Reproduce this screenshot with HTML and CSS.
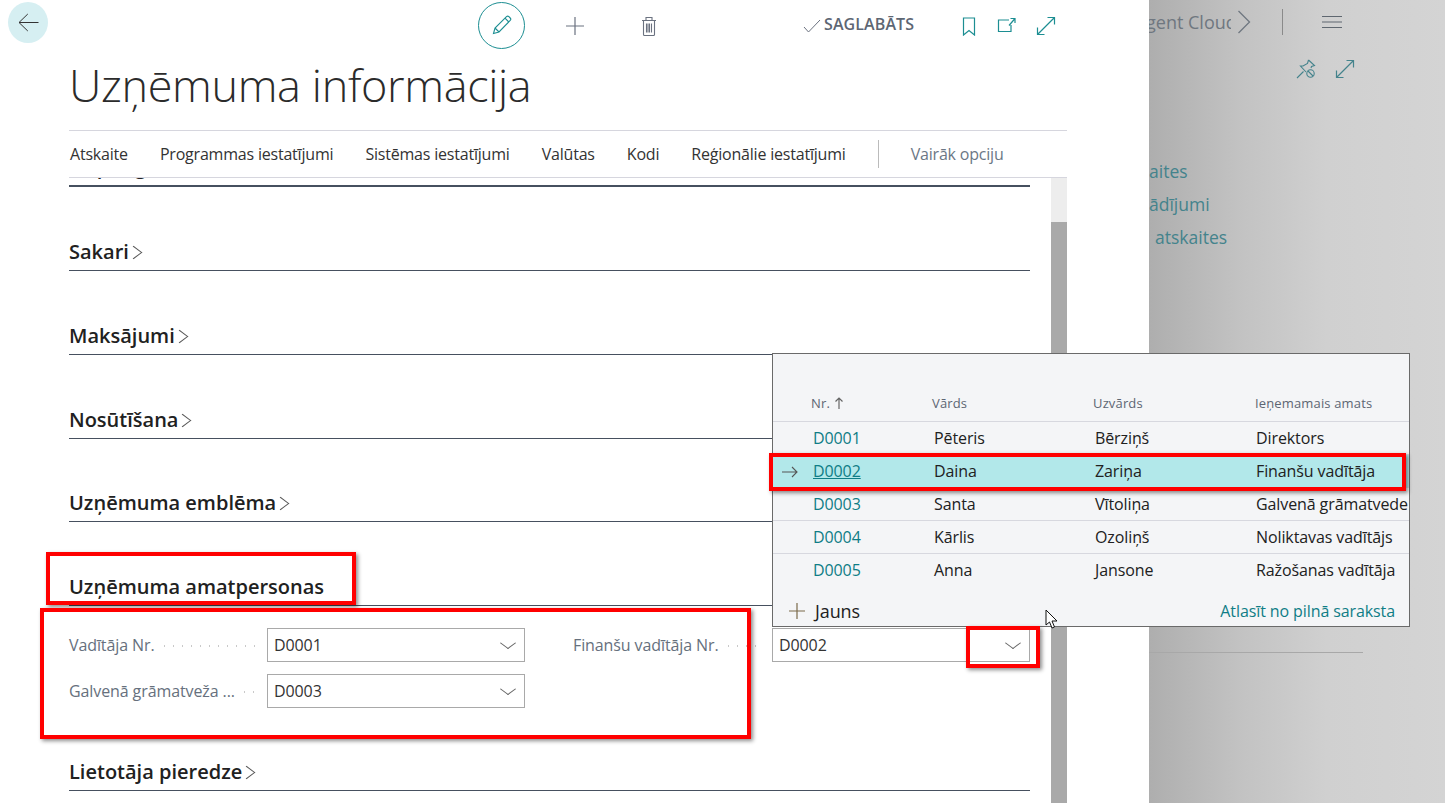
FILE: index.html
```html
<!DOCTYPE html>
<html lang="lv">
  <head>
    <meta charset="UTF-8" />
    <title>Uzņēmuma informācija</title>
    <link rel="stylesheet" href="styles.css">
  </head>
  <body>
    <div class="page">
      <main class="panel">
        <div class="panelHead">
          <button class="backBtn">
            <svg width="21" height="19" viewBox="0 0 21 19"><path d="M20.500 9.500H1M9.800 1 1 9.500l8.800 8.500" fill="none" stroke="#333" stroke-width="1"/></svg>
          </button>
          <button class="editBtn">
            <svg width="20" height="20" viewBox="0 0 20 20"><path d="M1.500 18.500 3 13 14.500 1.700a1.700 1.700 0 0 1 2.400 0l1.300 1.300a1.700 1.700 0 0 1 0 2.400L7 17zM3 13l4 4M13 3.200l3.800 3.800" fill="none" stroke="#1c8e92" stroke-width="1.100"/></svg>
          </button>
          <svg class="addIcon" width="20" height="20" viewBox="0 0 20 20"><path d="M10 1v18M1 10h18" stroke="#6b7280" stroke-width="1.200"/></svg>
          <svg class="trashIcon" width="16" height="20" viewBox="0 0 16 20"><path d="M1 4.500h14M5 4.500V1.500h6v3M2.500 4.500v14a1 1 0 0 0 1 1h9a1 1 0 0 0 1-1v-14M5.500 7.500v9M7 7.500v9M8.500 7.500v9M10.500 7.500v9" fill="none" stroke="#6b7280" stroke-width="1.100"/></svg>
          <div class="savedState">
            <svg width="18" height="14" viewBox="0 0 18 14"><path d="M1 8l4.500 5L17 1" fill="none" stroke="#6b7280" stroke-width="1"/></svg>
            <span>SAGLABĀTS</span>
          </div>
          <svg class="bookmarkIcon" width="14" height="19" viewBox="0 0 14 19"><path d="M1.500 1h11v17L7 13.500 1.500 18z" fill="none" stroke="#1c8e92" stroke-width="1.200"/></svg>
          <svg class="shareIcon" width="20" height="16" viewBox="0 0 20 16"><path d="M12 3H1.500v11.500H14V8M12 8.500 18 1.500M13.500 1.500H18V6" fill="none" stroke="#1c8e92" stroke-width="1.200"/></svg>
          <svg class="expandIcon" width="20" height="20" viewBox="0 0 20 20"><path d="M1.500 18.500 18.500 1.500M11.500 1.500h7v7M1.500 11.500v7h7" fill="none" stroke="#1c8e92" stroke-width="1.200"/></svg>
        </div>

        <h1 class="pageTitle">Uzņēmuma informācija</h1>

        <nav class="menuBar">
          <a>Atskaite</a>
          <a>Programmas iestatījumi</a>
          <a>Sistēmas iestatījumi</a>
          <a>Valūtas</a>
          <a>Kodi</a>
          <a>Reģionālie iestatījumi</a>
          <span class="menuDivider"></span>
          <a class="menuMore">Vairāk opciju</a>
        </nav>

        <div class="scrollArea">
          <div class="sections">
            <section class="tab tabFirst"><h2>Vispārīgi</h2></section>
            <section class="tab"><h2>Sakari<i class="chev"></i></h2></section>
            <section class="tab"><h2>Maksājumi<i class="chev"></i></h2></section>
            <section class="tab"><h2>Nosūtīšana<i class="chev"></i></h2></section>
            <section class="tab tabShort"><h2>Uzņēmuma emblēma<i class="chev"></i></h2></section>
            <section class="tab"><h2>Uzņēmuma amatpersonas</h2></section>

            <div class="fields">
              <div class="field">
                <label>Vadītāja Nr.</label><span class="leader"></span>
                <div class="select">D0001<i class="selectArrow"></i></div>
              </div>
              <div class="field fieldRight">
                <label>Finanšu vadītāja Nr.</label><span class="leader"></span>
                <div class="select">D0002<i class="selectArrow"></i></div>
              </div>
              <div class="field">
                <label>Galvenā grāmatveža ...</label><span class="leader"></span>
                <div class="select">D0003<i class="selectArrow"></i></div>
              </div>
            </div>

            <section class="tab tabShort"><h2>Lietotāja pieredze<i class="chev"></i></h2></section>
          </div>
          <div class="scrollbar"><div class="scrollThumb"></div></div>
        </div>
      </main>

      <aside class="behind">
        <div class="behindBar">
          <span class="behindName"><span>gent Cloud</span></span>
          <svg class="behindChev" width="14" height="24" viewBox="0 0 14 24"><path d="M1.500 1 12.500 12 1.500 23" fill="none" stroke="#6f7780" stroke-width="1.300"/></svg>
          <span class="behindDivider"></span>
          <svg width="20" height="12" viewBox="0 0 20 12"><path d="M0 .5h20M0 6h20M0 11.500h20" stroke="#5f6770" stroke-width="1"/></svg>
        </div>
        <div class="behindTools">
          <svg width="20" height="20" viewBox="0 0 20 20"><path d="M1 19l6.500-6.500M12.500 1l6 5.500-3 1-.5 1.500M12.500 1l-1 3.500L7 7l-2.500 0 5.500 6" fill="none" stroke="#44838c" stroke-width="1.100"/><circle cx="14.500" cy="14.500" r="3.700" fill="none" stroke="#44838c" stroke-width="1.100"/><path d="M12 12l5 5" stroke="#44838c" stroke-width="1.100"/></svg>
          <svg width="20" height="20" viewBox="0 0 20 20"><path d="M1.500 18.500 18.500 1.500M11.500 1.500h7v7M1.500 11.500v7h7" fill="none" stroke="#44838c" stroke-width="1.200"/></svg>
        </div>
        <div class="behindLinks">
          <a>aites</a>
          <a>ādījumi</a>
          <a class="linkIndent">atskaites</a>
        </div>
        <div class="behindRule"></div>
      </aside>

      <div class="lookup">
        <div class="lookupRow lookupHead">
          <span></span>
          <span class="nrHead">Nr. <svg width="8" height="12" viewBox="0 0 8 12"><path d="M4 12V1M.5 4.500 4 1l3.500 3.500" fill="none" stroke="#666" stroke-width="1.200"/></svg></span>
          <span>Vārds</span>
          <span>Uzvārds</span>
          <span>Ieņemamais amats</span>
        </div>
        <div class="lookupRow">
          <span></span><a>D0001</a><span>Pēteris</span><span>Bērziņš</span><span>Direktors</span>
        </div>
        <div class="lookupRow lookupSelected">
          <span class="rowArrow"><svg width="16" height="12" viewBox="0 0 16 12"><path d="M0 6h15M10 1l5 5-5 5" fill="none" stroke="#555" stroke-width="1.100"/></svg></span>
          <a>D0002</a><span>Daina</span><span>Zariņa</span><span>Finanšu vadītāja</span>
        </div>
        <div class="lookupRow">
          <span></span><a>D0003</a><span>Santa</span><span>Vītoliņa</span><span>Galvenā grāmatvede</span>
        </div>
        <div class="lookupRow">
          <span></span><a>D0004</a><span>Kārlis</span><span>Ozoliņš</span><span>Noliktavas vadītājs</span>
        </div>
        <div class="lookupRow lookupLast">
          <span></span><a>D0005</a><span>Anna</span><span>Jansone</span><span>Ražošanas vadītāja</span>
        </div>
        <div class="lookupFoot">
          <span class="newItem">
            <svg width="16" height="16" viewBox="0 0 16 16"><path d="M8 0v16M0 8h16" stroke="#7a6a4a" stroke-width="1.200"/></svg>
            Jauns
          </span>
          <a>Atlasīt no pilnā saraksta</a>
        </div>
      </div>

      <div class="mark markHeading"></div>
      <div class="mark markFields"></div>
      <div class="mark markRow"></div>
      <div class="mark markArrow"></div>

      <svg class="cursor" width="14" height="21" viewBox="0 0 14 21"><path d="M1 1v15l3.500-3 2.500 6 2.500-1-2.500-6H12z" fill="#fff" stroke="#111" stroke-width="1"/></svg>
    </div>
  </body>
</html>
```

FILE: styles.css
```css
* {
  box-sizing: border-box;
}
html,
body {
  margin: 0;
  height: 100%;
  overflow: hidden;
}
body {
  font-family: "Open Sans", "Noto Sans", Arial, sans-serif;
  color: #212121;
  background: #d4d4d4;
}

.page {
  position: relative;
  display: flex;
  width: 1445px;
  height: 803px;
  overflow: hidden;
}

/* main panel */
.panel {
  width: 1149px;
  flex: none;
  background: #fff;
  display: flex;
  flex-direction: column;
}
.panelHead {
  height: 48px;
  flex: none;
  display: flex;
  align-items: center;
  padding-left: 8px;
}
.backBtn {
  width: 40px;
  height: 41px;
  margin-bottom: 4px;
  border: none;
  border-radius: 50%;
  background: #d6eff2;
  padding: 0;
  display: flex;
  align-items: center;
  justify-content: center;
}
.editBtn {
  width: 47px;
  height: 47px;
  margin-left: 430px;
  margin-top: 2px;
  border: 1px solid #1c8e92;
  border-radius: 50%;
  background: #fff;
  padding: 0;
  display: flex;
  align-items: center;
  justify-content: center;
}
.addIcon {
  margin-left: 40px;
  margin-top: 4px;
}
.trashIcon {
  margin-left: 56px;
  margin-top: 4px;
}
.savedState {
  margin-left: 146px;
  display: flex;
  align-items: center;
  gap: 3px;
  font-size: 16px;
  font-weight: 600;
  letter-spacing: 0.1px;
  color: #5d6673;
}
.savedState svg {
  margin-top: 3px;
}
.bookmarkIcon {
  margin-left: 48px;
  margin-top: 4px;
}
.shareIcon {
  margin-left: 21px;
  margin-top: 2px;
}
.expandIcon {
  margin-left: 19px;
  margin-top: 4px;
}

.pageTitle {
  margin: 0 0 0 69px;
  height: 82px;
  flex: none;
  font-size: 45px;
  font-weight: 300;
  line-height: 74px;
  letter-spacing: -0.35px;
  color: #2b2b2b;
}

.menuBar {
  margin-left: 69px;
  width: 998px;
  height: 48px;
  flex: none;
  display: flex;
  align-items: center;
  gap: 32px;
  padding-left: 1px;
  border-top: 1px solid #d6d6de;
  border-bottom: 1px solid #d6d6de;
  font-size: 16px;
  letter-spacing: -0.2px;
  color: #333;
}
.menuDivider {
  width: 1px;
  height: 28px;
  background: #bbb;
}
.menuMore {
  color: #6b7785;
}

.scrollArea {
  flex: 1;
  min-height: 0;
  display: flex;
  padding-left: 69px;
  overflow: hidden;
}
.sections {
  width: 961px;
  flex: none;
}
.tab {
  height: 84px;
  display: flex;
  align-items: flex-end;
  border-bottom: 1px solid #46505f;
}
.tab h2 {
  margin: 0 0 5px;
  font-size: 20px;
  font-weight: 600;
  line-height: 26px;
  color: #212121;
  display: flex;
  align-items: center;
}
.tabFirst {
  margin-top: -75px;
  border-bottom-width: 2px;
}
.tabShort {
  height: 83px;
}
.chev {
  width: 11px;
  height: 11px;
  margin-left: -1px;
  border-top: 1px solid #555;
  border-right: 1px solid #555;
  transform: rotate(45deg) skew(-8deg, -8deg);
}

.fields {
  display: grid;
  grid-template-columns: 456px 457px;
  column-gap: 48px;
  row-gap: 12px;
  padding-top: 22px;
  height: 102px;
}
.field {
  display: flex;
  align-items: center;
  height: 34px;
  font-size: 16px;
  letter-spacing: -0.1px;
}
.field label {
  color: #66707d;
  white-space: nowrap;
}
.leader {
  flex: 1;
  height: 2px;
  margin: 2px 12px 0 9px;
  background: repeating-linear-gradient(90deg, #c9c9c9 0 1px, transparent 1px 9px);
}
.select {
  width: 258px;
  height: 34px;
  flex: none;
  display: flex;
  align-items: center;
  justify-content: space-between;
  padding: 0 9px 0 6px;
  border: 1px solid #a9a9a9;
  color: #333;
}
.selectArrow {
  width: 10px;
  height: 10px;
  margin: 0 2px 5px 0;
  border-right: 1px solid #666;
  border-bottom: 1px solid #666;
  transform: rotate(45deg) skew(-8deg, -8deg);
}

.scrollbar {
  width: 16px;
  flex: none;
  margin-left: 21px;
  background: #ededed;
  padding-top: 44px;
}
.scrollThumb {
  height: 100%;
  background: #a9a9a9;
}

/* page behind the panel */
.behind {
  flex: 1;
  background: linear-gradient(90deg, #aeaeae 0, #c2c2c2 30%, #d0d0d0 60%, #d4d4d4 100%);
  overflow: hidden;
}
.behindBar {
  height: 44px;
  display: flex;
  align-items: center;
  font-size: 18px;
  color: #6f7780;
}
.behindName {
  width: 82px;
  overflow: hidden;
  white-space: nowrap;
  text-indent: -3px;
}
.behindChev {
  margin-left: 6px;
}
.behindDivider {
  width: 1px;
  height: 26px;
  margin: 0 39px 0 31px;
  background: #8a8a8a;
}
.behindTools {
  display: flex;
  gap: 19px;
  padding: 15px 0 0 147px;
}
.behindLinks {
  display: flex;
  flex-direction: column;
  margin-top: 76px;
  font-size: 17.500px;
  line-height: 33px;
  color: #44838c;
}
.linkIndent {
  padding-left: 6px;
}
.behindRule {
  height: 1px;
  width: 214px;
  margin-top: 398px;
  background: #a8a8a8;
}

/* lookup dropdown */
.lookup {
  position: absolute;
  left: 772px;
  top: 353px;
  width: 638px;
  height: 274px;
  background: #f4f5f7;
  border: 1px solid #6a6a6a;
  font-size: 16px;
  letter-spacing: -0.1px;
}
.lookupRow {
  display: grid;
  grid-template-columns: 40px 121px 161px 161px 154px;
  align-items: center;
  height: 33px;
  padding-bottom: 1px;
  border-bottom: 1px solid #d7d8df;
  white-space: nowrap;
}
.lookupRow a {
  color: #0f7d86;
}
.lookupRow > span:last-child {
  overflow: hidden;
}
.lookupHead {
  height: 68px;
  padding-top: 32px;
  font-size: 13px;
  letter-spacing: 0.15px;
  color: #5d6673;
  grid-template-columns: 38px 121px 161px 162px 154px;
}
.nrHead svg {
  margin-left: 1px;
  vertical-align: -1px;
}
.lookupSelected {
  background: #b2e8ea;
}
.lookupSelected a {
  text-decoration: underline;
}
.lookupLast {
  border-bottom: none;
  padding-bottom: 2px;
}
.rowArrow {
  padding: 3px 0 0 9px;
}
.lookupFoot {
  height: 39px;
  display: flex;
  align-items: center;
  justify-content: space-between;
  padding: 8px 14px 0 16px;
}
.lookupFoot a {
  color: #0f7d86;
}
.newItem {
  display: flex;
  align-items: center;
  gap: 10px;
  font-size: 18px;
}

/* red annotation boxes */
.mark {
  position: absolute;
  border: 4px solid #f00;
  box-shadow: 2px 2px 4px rgba(0, 0, 0, 0.45);
}
.markHeading {
  left: 46px;
  top: 552px;
  width: 310px;
  height: 53px;
}
.markFields {
  left: 40px;
  top: 608px;
  width: 711px;
  height: 131px;
}
.markRow {
  left: 769px;
  top: 453px;
  width: 637px;
  height: 38px;
}
.markArrow {
  left: 966px;
  top: 626px;
  width: 74px;
  height: 42px;
}
.cursor {
  position: absolute;
  left: 1045px;
  top: 609px;
}
```
